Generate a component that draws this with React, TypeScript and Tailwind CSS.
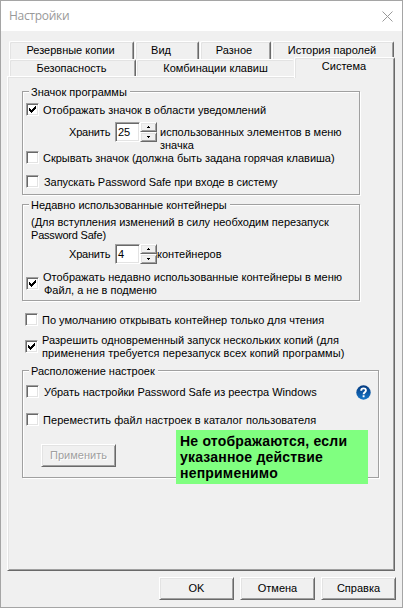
import type { ReactNode } from 'react';
import clsx from 'clsx';

const raised =
  'border border-t-white border-l-white border-r-[#696969] border-b-[#696969] shadow-[inset_1px_1px_0_#e3e3e3,inset_-1px_-1px_0_#a0a0a0]';
const sunken =
  'border border-t-[#a0a0a0] border-l-[#a0a0a0] border-r-white border-b-white shadow-[inset_1px_1px_0_#696969,inset_-1px_-1px_0_#e3e3e3]';

function Tab({ children, className, open }: { children: ReactNode; className: string; open?: boolean }) {
  return (
    <div
      className={clsx(
        'rounded-t-[2px] border-t border-l border-t-white border-l-white bg-[#f0f0f0] pt-[2px] text-center whitespace-nowrap',
        open
          ? 'shadow-[inset_1px_1px_0_#e3e3e3]'
          : 'border-r border-r-[#696969] shadow-[inset_1px_1px_0_#e3e3e3,inset_-1px_0_0_#a0a0a0]',
        className,
      )}
    >
      {children}
    </div>
  );
}

function Group({ title, className, children }: { title: string; className: string; children: ReactNode }) {
  return (
    <section
      className={clsx(
        'flex flex-col items-start border border-[#a0a0a0] shadow-[1px_1px_0_#fff,inset_1px_1px_0_#fff]',
        className,
      )}
    >
      <h2 className="-mt-[6px] ml-[6px] bg-[#f0f0f0] pr-[3px] pl-[2px]">{title}</h2>
      {children}
    </section>
  );
}

function Check({
  checked,
  className,
  boxClass = '',
  labelClass = 'mt-px',
  children,
}: {
  checked?: boolean;
  className: string;
  boxClass?: string;
  labelClass?: string;
  children: ReactNode;
}) {
  return (
    <label className={clsx('flex items-start', className)}>
      <span className={clsx('block size-[13px] shrink-0 bg-white', sunken, boxClass)}>
        {checked && (
          <svg className="block size-[11px]" viewBox="0 0 11 11" shapeRendering="crispEdges">
            <path d="M2 4h1v1h1v1h1v-1h1v-1h1v-1h1v-1h1v3h-1v1h-1v1h-1v1h-1v1h-1v-1h-1v-1h-1z" fill="#000" />
          </svg>
        )}
      </span>
      <span className={clsx('ml-1 whitespace-nowrap', labelClass)}>{children}</span>
    </label>
  );
}

function SpinButton({ up }: { up?: boolean }) {
  return (
    <span className={clsx('flex h-[10px] w-[17px] items-center justify-center bg-[#f0f0f0]', raised)}>
      <svg className="block h-[2px] w-[3px]" viewBox="0 0 3 2" shapeRendering="crispEdges">
        <path d={up ? 'M1 0h1v1h1v1H0V1h1z' : 'M0 0h3v1H2v1H1V1H0z'} fill="#000" />
      </svg>
    </span>
  );
}

function Spin({ value, className, suffixClass, children }: { value: string; className: string; suffixClass: string; children: ReactNode }) {
  return (
    <div className={clsx('ml-[46px] flex items-start', className)}>
      <span className="mt-1 w-[46px] tracking-[-0.2px]">Хранить</span>
      <span className={clsx('block h-[20px] w-[25px] bg-white pt-[3px] pl-[2px]', sunken)}>{value}</span>
      <span className="flex flex-col">
        <SpinButton up />
        <SpinButton />
      </span>
      <span className={clsx('mt-1 whitespace-nowrap', suffixClass)}>{children}</span>
    </div>
  );
}

function Button({ children, disabled, className }: { children: ReactNode; disabled?: boolean; className?: string }) {
  return (
    <button
      type="button"
      className={clsx(
        'h-[23px] w-[75px] bg-[#f0f0f0] text-center',
        raised,
        disabled && 'text-[#a0a0a0] [text-shadow:1px_1px_0_#fff]',
        className,
      )}
    >
      {children}
    </button>
  );
}

export default function App() {
  return (
    <main className='flex h-[608px] w-[403px] flex-col border border-[#a5a5a5] bg-[#f0f0f0] font-["Liberation_Sans",Arial,sans-serif] text-[11px] leading-[13px] text-black'>
      <header className="flex h-[30px] items-center justify-between bg-white pr-[9px] pl-[8px]">
        <h1 className='font-["Open_Sans",sans-serif] text-[12px] leading-[16px] tracking-[-0.3px] text-[#999]'>Настройки</h1>
        <svg className="block size-[11px]" viewBox="0 0 11 11">
          <path d="M.5.5l10 10M10.5.5l-10 10" stroke="#999" fill="none" />
        </svg>
      </header>

      <nav className="mt-[10px] ml-[8px] flex h-[18px]">
        <Tab className="w-[125px] pr-[2px]">Резервные копии</Tab>
        <Tab className="ml-px w-[64px] pr-[12px]">Вид</Tab>
        <Tab className="ml-px w-[71px] pr-[3px]">Разное</Tab>
        <Tab className="ml-px w-[122px] pr-[2px]">История паролей</Tab>
      </nav>
      <nav className="ml-[8px] flex h-[17px]">
        <Tab className="w-[127px] pr-[2px]">Безопасность</Tab>
        <Tab open className="w-[158px]">
          Комбинации клавиш
        </Tab>
        <Tab className="relative -mt-[2px] h-[21px] w-[101px] pr-px">Система</Tab>
      </nav>

      <div className={clsx('ml-[6px] flex h-[495px] w-[388px] flex-col', raised)}>
        <Group title="Значок программы" className="mt-[14px] ml-[14px] h-[104px] w-[338px]">
          <Check checked className="mt-1 ml-[3px] h-[19px]">
            Отображать значок в области уведомлений
          </Check>
          <Spin value="25" className="h-[29px]" suffixClass="ml-[3px]">
            использованных элементов в меню
            <br />
            значка
          </Spin>
          <Check className="ml-[3px] h-[24px]">Скрывать значок (должна быть задана горячая клавиша)</Check>
          <Check className="ml-[3px]" labelClass="mt-px pl-px tracking-[-0.05px]">
            Запускать Password Safe при входе в систему
          </Check>
        </Group>

        <Group title="Недавно использованные контейнеры" className="mt-[9px] ml-[14px] h-[97px] w-[338px]">
          <p className="mt-1 ml-[8px] whitespace-nowrap">
            (Для вступления изменений в силу необходим перезапуск
            <br />
            <span className="tracking-[-0.2px]">Password Safe)</span>
          </p>
          <Spin value="4" className="mt-[2px] h-[20px]" suffixClass="">
            контейнеров
          </Spin>
          <Check checked className="mt-[7px] ml-[3px]" boxClass="mt-[6px]" labelClass="">
            Отображать недавно использованные контейнеры в меню
            <br />
            <span className="pl-px">Файл, а не в подменю</span>
          </Check>
        </Group>

        <Check className="mt-[12px] ml-[17px] h-[21px]">По умолчанию открывать контейнер только для чтения</Check>
        <Check checked className="ml-[17px]" boxClass="mt-[6px]" labelClass="">
          <span className="tracking-[0.03px]">Разрешить одновременный запуск нескольких копий (для</span>
          <br />
          <span className="tracking-[0.08px]">применения требуется перезапуск всех копий программы)</span>
        </Check>

        <Group title="Расположение настроек" className="relative mt-[10px] ml-[14px] h-[108px] w-[357px]">
          <div className="mt-[7px] flex h-[28px] w-full items-start justify-between pr-[7px] pl-[3px]">
            <Check className="" labelClass="mt-px pl-px tracking-[-0.03px]">
              Убрать настройки Password Safe из реестра Windows
            </Check>
            <svg className="block size-[15px]" viewBox="0 0 15 15">
              <defs>
                <linearGradient id="help" x1="0" y1="0" x2="0" y2="1">
                  <stop offset="0" stopColor="#043a80" />
                  <stop offset="1" stopColor="#1676c8" />
                </linearGradient>
              </defs>
              <circle cx="7.5" cy="7.5" r="7.2" fill="url(#help)" />
              <path d="M5.2 5.7C5.2 2.6 9.9 2.7 9.9 5.4C9.9 7.2 7.6 7.1 7.6 9.2M7.6 10.3v1.9" stroke="#fff" strokeWidth="1.9" fill="none" />
            </svg>
          </div>
          <Check className="ml-[3px] h-[31px]" labelClass="mt-px tracking-[0.06px]">
            Переместить файл настроек в каталог пользователя
          </Check>
          <Button disabled className="ml-[18px]">
            Применить
          </Button>
          <aside className="absolute top-[59px] left-[153px] h-[54px] w-[192px] bg-[#80ff80] pt-[3px] pl-[4px] text-[14px] leading-[16px] font-bold tracking-[0.2px] whitespace-nowrap">
            Не отображаются, если
            <br />
            указанное действие
            <br />
            неприменимо
          </aside>
        </Group>
      </div>

      <footer className="mt-[6px] flex justify-end gap-[6px] pr-[6px]">
        <Button>OK</Button>
        <Button>Отмена</Button>
        <Button>Справка</Button>
      </footer>
    </main>
  );
}
